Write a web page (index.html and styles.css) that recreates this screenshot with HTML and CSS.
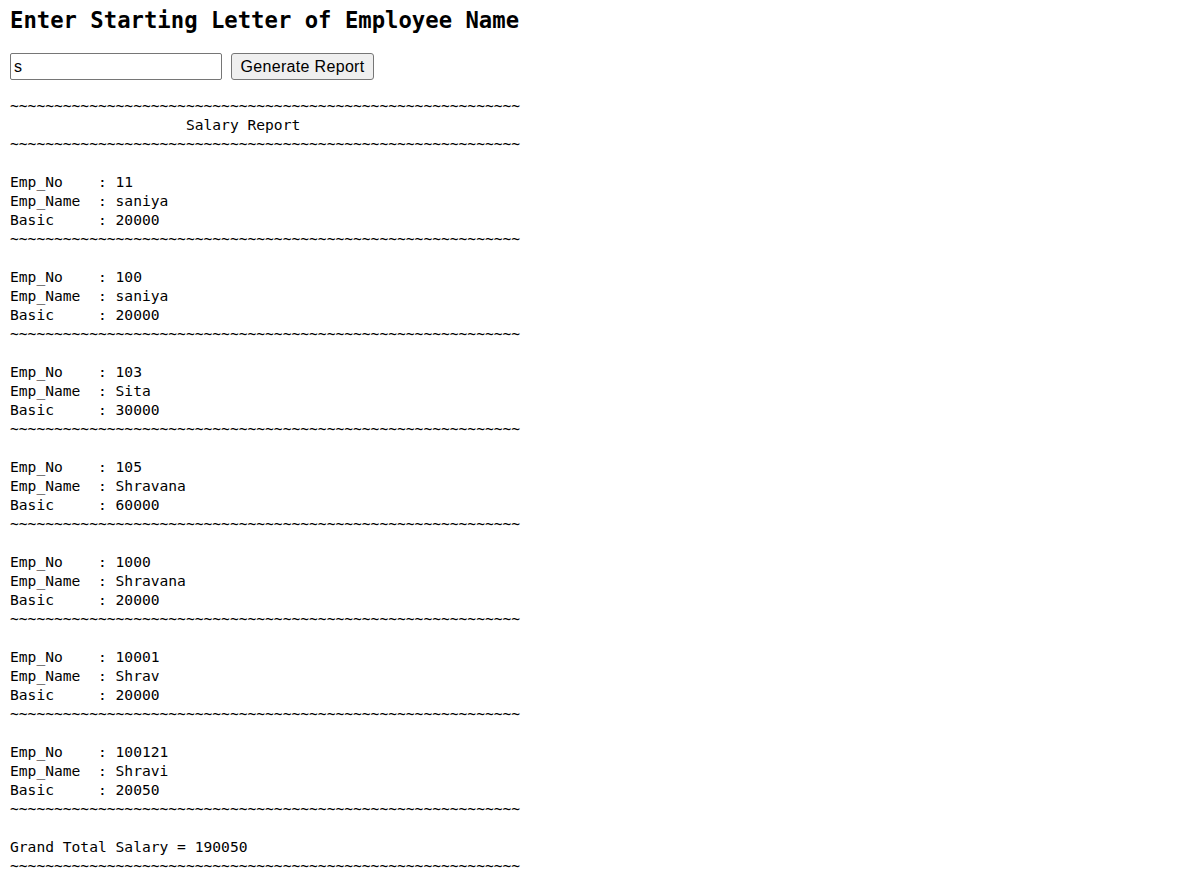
FILE: index.html
```html
<!DOCTYPE html>
<html>
<head>
<meta charset="utf-8">
<title>Salary Report</title>
<link rel="stylesheet" href="styles.css">
</head>
<body>
<h2 class="title">Enter Starting Letter of Employee Name</h2>
<form class="search">
<input class="letter" type="text" value="s">
<button class="gen" type="button">Generate Report</button>
</form>
<pre class="report">~~~~~~~~~~~~~~~~~~~~~~~~~~~~~~~~~~~~~~~~~~~~~~~~~~~~~~~~~~
                    Salary Report
~~~~~~~~~~~~~~~~~~~~~~~~~~~~~~~~~~~~~~~~~~~~~~~~~~~~~~~~~~

Emp_No    : 11
Emp_Name  : saniya
Basic     : 20000
~~~~~~~~~~~~~~~~~~~~~~~~~~~~~~~~~~~~~~~~~~~~~~~~~~~~~~~~~~

Emp_No    : 100
Emp_Name  : saniya
Basic     : 20000
~~~~~~~~~~~~~~~~~~~~~~~~~~~~~~~~~~~~~~~~~~~~~~~~~~~~~~~~~~

Emp_No    : 103
Emp_Name  : Sita
Basic     : 30000
~~~~~~~~~~~~~~~~~~~~~~~~~~~~~~~~~~~~~~~~~~~~~~~~~~~~~~~~~~

Emp_No    : 105
Emp_Name  : Shravana
Basic     : 60000
~~~~~~~~~~~~~~~~~~~~~~~~~~~~~~~~~~~~~~~~~~~~~~~~~~~~~~~~~~

Emp_No    : 1000
Emp_Name  : Shravana
Basic     : 20000
~~~~~~~~~~~~~~~~~~~~~~~~~~~~~~~~~~~~~~~~~~~~~~~~~~~~~~~~~~

Emp_No    : 10001
Emp_Name  : Shrav
Basic     : 20000
~~~~~~~~~~~~~~~~~~~~~~~~~~~~~~~~~~~~~~~~~~~~~~~~~~~~~~~~~~

Emp_No    : 100121
Emp_Name  : Shravi
Basic     : 20050
~~~~~~~~~~~~~~~~~~~~~~~~~~~~~~~~~~~~~~~~~~~~~~~~~~~~~~~~~~

Grand Total Salary = 190050
~~~~~~~~~~~~~~~~~~~~~~~~~~~~~~~~~~~~~~~~~~~~~~~~~~~~~~~~~~
</pre>
</body>
</html>
```

FILE: styles.css
```css
html, body {
  margin: 0;
  padding: 0;
  background: #ffffff;
  color: #000000;
}

body {
  padding: 0 10px;
  font-family: "DejaVu Sans Mono", "Liberation Mono", monospace;
}

.title {
  margin: 6px 0 0 0;
  font-family: "DejaVu Sans Mono", "Liberation Mono", monospace;
  font-weight: bold;
  font-size: 22.25px;
  line-height: 28px;
  white-space: nowrap;
}

.search {
  display: flex;
  align-items: center;
  gap: 9px;
  margin: 19px 0 0 0;
}

.letter {
  box-sizing: border-box;
  width: 212px;
  height: 27px;
  margin: 0;
  padding: 1px 3px;
  border: 1px solid #767676;
  border-radius: 2px;
  font-family: "Liberation Sans", Arial, sans-serif;
  font-size: 16px;
  color: #000;
  background: #fff;
}

.gen {
  box-sizing: border-box;
  width: 143px;
  height: 27px;
  margin: 0;
  padding: 0 4px;
  border: 1px solid #767676;
  border-radius: 3px;
  background: #efefef;
  font-family: "Liberation Sans", Arial, sans-serif;
  font-size: 16px;
  letter-spacing: 0.33px;
  color: #000;
}

.report {
  margin: 16px 0 0 0;
  font-family: "DejaVu Sans Mono", "Liberation Mono", monospace;
  font-size: 14.62px;
  line-height: 19px;
}
```
